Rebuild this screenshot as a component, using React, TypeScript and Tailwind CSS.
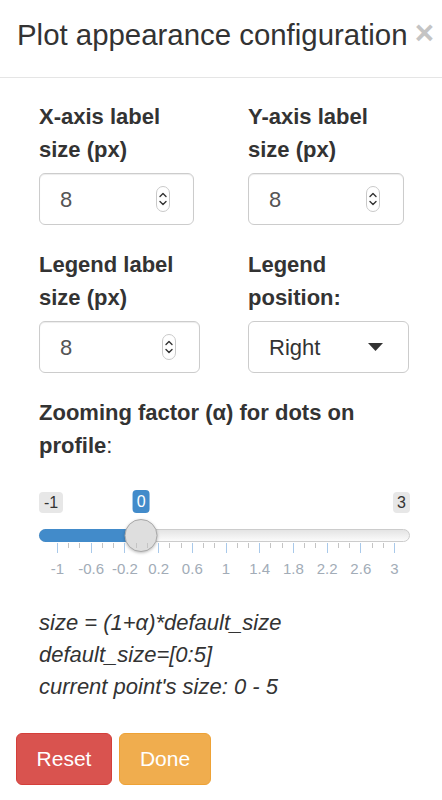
import React from 'react';

// ── Small pieces ─────────────────────────────────────────────────────────────

function Spinner() {
  return (
    <svg width="14" height="26" viewBox="0 0 14 26" className="shrink-0">
      <rect x="0.5" y="0.5" width="13" height="25" rx="6.5" fill="#fff" stroke="#c9c9c9" />
      <path d="M4 10.5 L7 7.5 L10 10.5" fill="none" stroke="#333" strokeWidth="1.4" strokeLinecap="round" strokeLinejoin="round" />
      <path d="M4 15.5 L7 18.5 L10 15.5" fill="none" stroke="#333" strokeWidth="1.4" strokeLinecap="round" strokeLinejoin="round" />
    </svg>
  );
}

function NumberField({ value, width }: { value: string; width: string }) {
  return (
    <div
      className={`${width} flex h-[52px] items-center justify-between rounded-[6px] border border-[#cccccc] bg-white pl-[20px] pr-[23px] text-[22px] text-[#555] shadow-[inset_0_1px_1px_rgba(0,0,0,0.075)]`}
    >
      <span>{value}</span>
      <Spinner />
    </div>
  );
}

function SelectField({ value }: { value: string }) {
  return (
    <div className="flex h-[52px] w-[161px] items-center justify-between rounded-[6px] border border-[#cccccc] bg-white pl-[20px] pr-[25px] text-[22px] text-[#333]">
      <span>{value}</span>
      <svg width="15" height="8" viewBox="0 0 15 8">
        <path d="M0 0 H15 L7.5 8 Z" fill="#333" />
      </svg>
    </div>
  );
}

function Label({ children }: { children: React.ReactNode }) {
  return <div className="mb-[7px] text-[22px] font-bold leading-[33px] text-[#333]">{children}</div>;
}

// ── Range slider (ion.rangeSlider look) ──────────────────────────────────────

const TICKS = ['-1', '-0.6', '-0.2', '0.2', '0.6', '1', '1.4', '1.8', '2.2', '2.6', '3'];
const GRID_START = 18;
const GRID_STEP = 33.7;

function RangeSlider() {
  const handleX = GRID_START + (GRID_STEP * 10) / 4; // value 0 on -1..3

  return (
    <div className="relative h-[95px] w-[371px]">
      {/* min / value / max labels */}
      <span className="absolute left-0 top-[4px] rounded-[4px] bg-[#e7e7e7] px-[5px] text-[16px] leading-[21px] text-[#333]">
        -1
      </span>
      <span
        className="absolute top-[2px] -translate-x-1/2 rounded-[4px] bg-[#428bca] px-[4px] text-[16px] leading-[23px] text-white"
        style={{ left: handleX }}
      >
        0
      </span>
      <span className="absolute right-0 top-[4px] rounded-[4px] bg-[#e7e7e7] px-[4px] text-[16px] leading-[21px] text-[#333]">
        3
      </span>

      {/* track */}
      <div className="absolute left-0 right-0 top-[41px] h-[13px] rounded-full border border-[#cccccc] bg-gradient-to-b from-[#e4e4e4] to-[#fbfbfb]" />
      <div
        className="absolute left-0 top-[41px] h-[13px] rounded-l-full bg-[#428bca]"
        style={{ width: handleX }}
      />

      {/* handle */}
      <div
        className="absolute top-[31px] h-[33px] w-[33px] -translate-x-1/2 rounded-full border border-[#a9a9a9] bg-[#dedede] shadow-[0_1px_3px_rgba(0,0,0,0.25)]"
        style={{ left: handleX }}
      />

      {/* grid */}
      {TICKS.map((t, i) => {
        const x = GRID_START + i * GRID_STEP;
        return (
          <React.Fragment key={t}>
            <div className="absolute top-[55px] h-[10px] w-px bg-[#a9c9ea]" style={{ left: x }} />
            {i < TICKS.length - 1 && (
              <>
                <div className="absolute top-[55px] h-[5px] w-px bg-[#c4c4c4]" style={{ left: x + GRID_STEP / 3 }} />
                <div className="absolute top-[55px] h-[5px] w-px bg-[#c4c4c4]" style={{ left: x + (GRID_STEP * 2) / 3 }} />
              </>
            )}
            <span
              className="absolute top-[72px] -translate-x-1/2 text-[15px] leading-[18px] text-[#a2acb7]"
              style={{ left: x + 0.5 }}
            >
              {t}
            </span>
          </React.Fragment>
        );
      })}
    </div>
  );
}

// ── Modal ────────────────────────────────────────────────────────────────────

export default function App() {
  return (
    <div className="min-h-screen w-[442px] bg-white font-['Liberation_Sans',Arial,sans-serif] text-[#333]">
      {/* header */}
      <div className="flex items-start justify-between border-b border-[#e5e5e5] pb-[26px] pl-[17px] pr-[8px] pt-[19px]">
        <h4 className="text-[29.4px] leading-[32px] text-[#333]">Plot appearance configuration</h4>
        <span className="-mt-[3px] text-[33px] font-bold leading-none text-[#c4c4c4]">×</span>
      </div>

      {/* body */}
      <div className="pl-[39px] pt-[22px]">
        <div className="grid grid-cols-[209px_1fr] gap-y-[23px]">
          <div>
            <Label>
              X-axis label
              <br />
              size (px)
            </Label>
            <NumberField value="8" width="w-[155px]" />
          </div>
          <div>
            <Label>
              Y-axis label
              <br />
              size (px)
            </Label>
            <NumberField value="8" width="w-[156px]" />
          </div>
          <div>
            <Label>
              Legend label
              <br />
              size (px)
            </Label>
            <NumberField value="8" width="w-[161px]" />
          </div>
          <div>
            <Label>
              Legend
              <br />
              position:
            </Label>
            <SelectField value="Right" />
          </div>
        </div>

        <div className="mt-[23px] text-[22px] font-bold leading-[33px] text-[#333]">
          Zooming factor (α) for dots on
          <br />
          profile<span className="font-normal">:</span>
        </div>

        <div className="mt-[26px]">
          <RangeSlider />
        </div>

        <div className="mt-[24px] text-[22px] italic leading-[32px] text-[#333]">
          <div>size = (1+α)*default_size</div>
          <div>default_size=[0:5]</div>
          <div>current point's size: 0 - 5</div>
        </div>
      </div>

      {/* footer */}
      <div className="flex gap-[7px] pl-[16px] pt-[30px]">
        <button className="h-[52px] w-[96px] rounded-[6px] border border-[#d43f3a] bg-[#d9534f] text-[21px] text-white">
          Reset
        </button>
        <button className="h-[52px] w-[92px] rounded-[6px] border border-[#eea236] bg-[#f0ad4e] text-[21px] text-white">
          Done
        </button>
      </div>
    </div>
  );
}
